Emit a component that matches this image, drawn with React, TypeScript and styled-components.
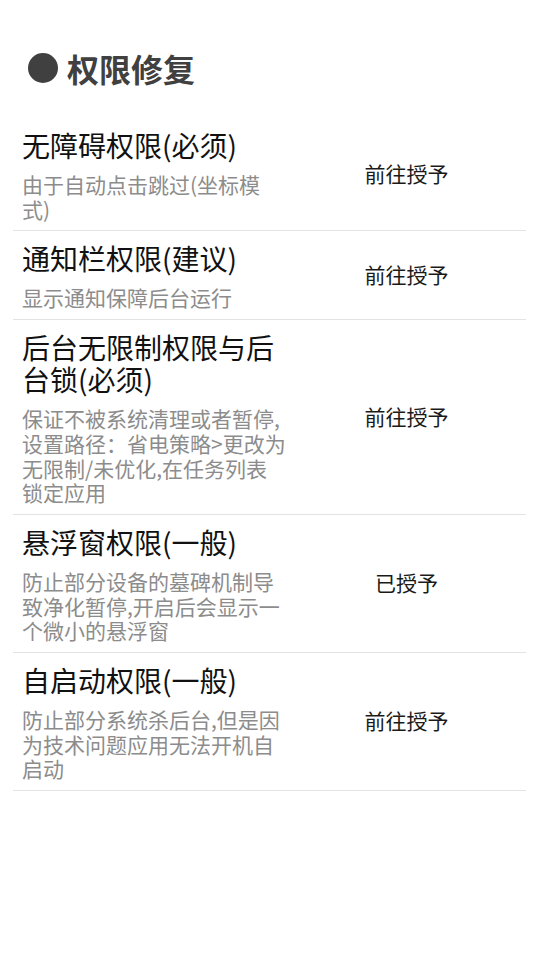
import styled, { createGlobalStyle } from "styled-components";

const GlobalStyle = createGlobalStyle`
  html, body {
    margin: 0;
    padding: 0;
    background: #ffffff;
  }
  body {
    font-family: "Noto Sans CJK SC", "Noto Sans", sans-serif;
  }
`

const Page = styled.div`
  width: 540px;
  min-height: 960px;
  background: #fff;
`

const Header = styled.h1`
  display: flex;
  align-items: center;
  gap: 9px;
  margin: 0;
  padding: 49px 0 31px 28px;
  font-size: 32px;
  font-weight: 700;
  line-height: 38px;
  color: #404040;
`

const Dot = styled.span`
  width: 30px;
  height: 30px;
  border-radius: 50%;
  background: #404040;
`

const List = styled.div`
  margin: 0 14px 0 13px;
`

const Row = styled.div`
  display: flex;
  align-items: center;
  border-bottom: 1px solid #e3e3e3;
  padding: 11px 0 9px 9px;
`

const Info = styled.div`
  width: 265px;
`

const Title = styled.div`
  font-size: 28px;
  line-height: 32px;
  color: #111;
`

const Desc = styled.div`
  margin-top: 11px;
  font-size: 21px;
  line-height: 24.7px;
  color: #8c8c8c;
`

const Action = styled.div`
  flex: 1;
  padding-bottom: 5px;
  text-align: center;
  font-size: 21px;
  color: #1a1a1a;
`

interface Permission {
  title: string;
  desc: string;
  granted?: boolean;
}

const permissions: Permission[] = [
  { title: "无障碍权限(必须)", desc: "由于自动点击跳过(坐标模式)" },
  { title: "通知栏权限(建议)", desc: "显示通知保障后台运行" },
  {
    title: "后台无限制权限与后台锁(必须)",
    desc: "保证不被系统清理或者暂停,设置路径：省电策略>更改为无限制/未优化,在任务列表锁定应用",
  },
  {
    title: "悬浮窗权限(一般)",
    desc: "防止部分设备的墓碑机制导致净化暂停,开启后会显示一个微小的悬浮窗",
    granted: true,
  },
  { title: "自启动权限(一般)", desc: "防止部分系统杀后台,但是因为技术问题应用无法开机自启动" },
]

function App() {
  return (
    <>
      <GlobalStyle />
      <Page>
        <Header>
          <Dot />
          权限修复
        </Header>
        <List>
          {permissions.map((p) => (
            <Row key={p.title}>
              <Info>
                <Title>{p.title}</Title>
                <Desc>{p.desc}</Desc>
              </Info>
              <Action>{p.granted ? "已授予" : "前往授予"}</Action>
            </Row>
          ))}
        </List>
      </Page>
    </>
  )
}

export default App;
